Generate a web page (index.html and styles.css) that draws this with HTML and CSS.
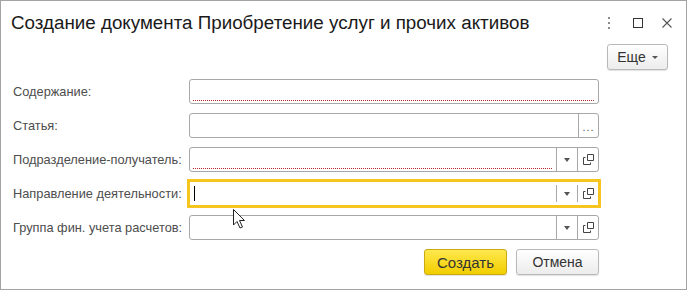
FILE: index.html
```html
<!DOCTYPE html>
<html>
<head>
  <meta charset="UTF-8">
  <title>Создание документа</title>
  <link rel="stylesheet" href="styles.css">
</head>
<body>

<div class="window">
  <div class="titlebar">
    <h1 class="title">Создание документа Приобретение услуг и прочих активов</h1>
    <div class="winTools">
      <svg class="tool" width="14" height="14" viewBox="0 0 14 14">
        <rect x="6" y="1" width="2" height="2" fill="#8a8a8a"/>
        <rect x="6" y="6" width="2" height="2" fill="#8a8a8a"/>
        <rect x="6" y="11" width="2" height="2" fill="#8a8a8a"/>
      </svg>
      <svg class="tool" width="14" height="14" viewBox="0 0 14 14">
        <rect x="2.5" y="2.5" width="9" height="9" fill="none" stroke="#333" stroke-width="1"/>
      </svg>
      <svg class="tool" width="14" height="14" viewBox="0 0 14 14">
        <path d="M2.5 2.5 L11.5 11.5 M11.5 2.5 L2.5 11.5" stroke="#555" stroke-width="1.1"/>
      </svg>
    </div>
  </div>

  <div class="cmdbar">
    <button class="btn more">Еще <span class="caret"></span></button>
  </div>

  <div class="form">
    <label class="lbl">Содержание:</label>
    <div class="field">
      <div class="input"><span class="req"></span></div>
    </div>

    <label class="lbl">Статья:</label>
    <div class="field">
      <div class="input"></div>
      <div class="fbtn dots">...</div>
    </div>

    <label class="lbl">Подразделение-получатель:</label>
    <div class="field">
      <div class="input"><span class="req"></span></div>
      <div class="fbtn"><span class="tri"></span></div>
      <div class="fbtn"><svg width="11" height="11" viewBox="0 0 11 11"><path d="M4.5 0.5 H10.5 V6.5 H4.5 Z M2.5 3.5 H0.5 V10.5 H7.5 V8.5" fill="none" stroke="#444" stroke-width="1"/></svg></div>
    </div>

    <label class="lbl">Направление деятельности:</label>
    <div class="field focused">
      <div class="input"><span class="caretline"></span></div>
      <div class="fbtn"><span class="tri"></span></div>
      <div class="fbtn"><svg width="11" height="11" viewBox="0 0 11 11"><path d="M4.5 0.5 H10.5 V6.5 H4.5 Z M2.5 3.5 H0.5 V10.5 H7.5 V8.5" fill="none" stroke="#444" stroke-width="1"/></svg></div>
    </div>

    <label class="lbl">Группа фин. учета расчетов:</label>
    <div class="field">
      <div class="input"></div>
      <div class="fbtn"><span class="tri"></span></div>
      <div class="fbtn"><svg width="11" height="11" viewBox="0 0 11 11"><path d="M4.5 0.5 H10.5 V6.5 H4.5 Z M2.5 3.5 H0.5 V10.5 H7.5 V8.5" fill="none" stroke="#444" stroke-width="1"/></svg></div>
    </div>
  </div>

  <div class="footer">
    <button class="btn primary">Создать</button>
    <button class="btn">Отмена</button>
  </div>

  <svg class="pointer" width="14" height="22" viewBox="0 0 14 22">
    <path d="M1.5 1.5 V17 L5 13.5 L8 20 L10.5 19 L7.5 12.5 H12.5 Z" fill="#fff" stroke="#222" stroke-width="1" stroke-linejoin="round"/>
  </svg>
</div>

</body>
</html>
```

FILE: styles.css
```css
body, html {
  margin: 0;
  padding: 0;
  background: #fff;
  font-family: "Liberation Sans", Arial, sans-serif;
}
.window {
  position: relative;
  width: 685px;
  height: 288px;
  border: 1px solid #a3a3a3;
  background: #fff;
}
.titlebar {
  display: flex;
  align-items: center;
  height: 43px;
  padding: 0 12px 0 10px;
}
.title {
  flex: 1;
  margin: 0;
  font-size: 18.8px;
  font-weight: normal;
  color: #1a1a1a;
  white-space: nowrap;
}
.winTools {
  display: flex;
  gap: 15px;
}
.tool {
  display: block;
}
.cmdbar {
  display: flex;
  justify-content: flex-end;
  padding-right: 18px;
}
.btn {
  font-family: "Liberation Sans", Arial, sans-serif;
  font-size: 13px;
  color: #333;
  height: 26px;
  padding: 0 10px;
  border: 1px solid #b9b9b9;
  border-radius: 3px;
  background: linear-gradient(#ffffff, #ececec);
  box-shadow: 0 1px 1px rgba(0,0,0,0.12);
}
.more {
  width: 61px;
  display: flex;
  align-items: center;
  justify-content: center;
  gap: 6px;
  font-size: 14px;
}
.caret {
  width: 0;
  height: 0;
  border-left: 3px solid transparent;
  border-right: 3px solid transparent;
  border-top: 3px solid #555;
}
.form {
  display: grid;
  grid-template-columns: 176px 410px;
  row-gap: 9px;
  align-items: center;
  margin: 9px 0 0 12px;
}
.lbl {
  font-size: 12.8px;
  color: #4d4d4d;
}
.field {
  display: flex;
  height: 23px;
  border: 1px solid #a8a8a8;
  border-radius: 3px;
}
.field.focused {
  border-color: #f6c520;
  box-shadow: 0 0 0 2px #f6c520;
  border-radius: 0;
}
.input {
  flex: 1;
  position: relative;
}
.req {
  position: absolute;
  left: 3px;
  right: 4px;
  bottom: 2px;
  border-bottom: 1px dotted #c0262a;
}
.caretline {
  position: absolute;
  left: 4px;
  top: 4px;
  width: 1px;
  height: 15px;
  background: #000;
}
.fbtn {
  width: 20px;
  border-left: 1px solid #a8a8a8;
  display: flex;
  align-items: center;
  justify-content: center;
  color: #555;
  font-size: 11px;
}
.focused .fbtn {
  margin: 3px 0;
}
.dots {
  align-items: flex-end;
  padding-bottom: 7px;
  box-sizing: border-box;
  letter-spacing: 1px;
  line-height: 6px;
}
.tri {
  width: 0;
  height: 0;
  border-left: 3px solid transparent;
  border-right: 3px solid transparent;
  border-top: 4px solid #555;
}
.footer {
  display: flex;
  justify-content: flex-end;
  gap: 9px;
  margin: 9px 87px 0 0;
}
.footer .btn {
  width: 83px;
  font-size: 14px;
}
.btn.primary {
  background: linear-gradient(#ffe84d, #f2cd00);
  border-color: #c9aa10;
  color: #333;
  font-size: 15px;
}
.pointer {
  position: absolute;
  left: 231px;
  top: 207px;
}
```
